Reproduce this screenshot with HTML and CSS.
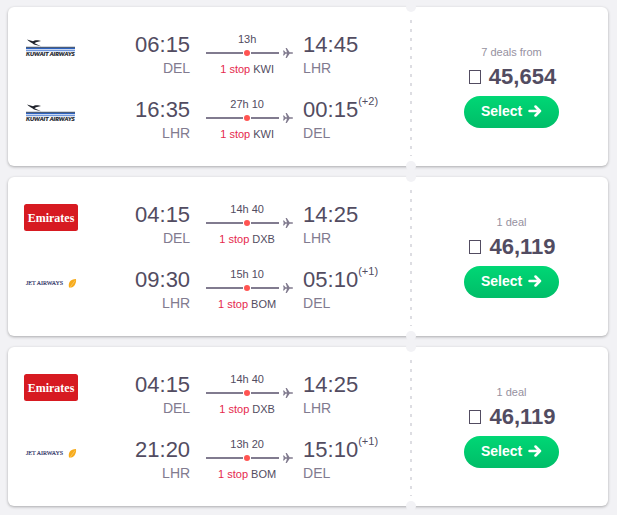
FILE: index.html
```html
<!DOCTYPE html>
<html lang="en">
<head>
<meta charset="utf-8">
<meta name="viewport" content="width=device-width, initial-scale=1">
<title>Flight results</title>
<link rel="stylesheet" href="styles.css">
</head>
<body>
<svg class="defs" aria-hidden="true">
  <symbol id="crane" viewBox="0 0 54 27">
    <path d="M3 5.500 L9 7.300 C10 5.800 15 5.800 17 7 L12 8.200 L10.500 9.200 L17 12.300 L10 10.500 C8 8.500 5 8 3 5.500Z" fill="#20232b"/>
    <path d="M2 12.800H51V14H2Z" fill="#4b5d78"/>
    <path d="M2 14H51V15.300H2Z" fill="#2d62c0"/>
    <path d="M2 15.900H51V17.200H2Z" fill="#6f97dc"/>
  </symbol>
  <symbol id="feather" viewBox="0 0 54 27">
    <path d="M45 18.500 C44 14 46 10 52 10 C52.500 13 51 17.500 47.500 18.500Z" fill="#f7ab1b"/>
    <path d="M46 18.500L51 11.500" stroke="#fbd077" stroke-width=".7"/>
  </symbol>
  <symbol id="plane" viewBox="0 0 10 10">
    <path d="M0 2.600H1L2.500 4.300H4L2.600 0H3.800L6.600 4.300H9C9.700 4.300 10 4.700 10 5S9.700 5.700 9 5.700H6.600L3.800 10H2.600L4 5.700H2.500L1 7.400H0L.7 5Z" fill="#817b8f"/>
  </symbol>
</svg>
<main class="results">
  <article class="ticket">
    <div class="legs">
      <div class="leg">
        <svg class="logo" viewBox="0 0 54 27"><use href="#crane"/><text x="2" y="22" class="kuwait-text">KUWAIT AIRWAYS</text></svg>
        <div class="depart"><div class="time">06:15</div><div class="code">DEL</div></div>
        <div class="route">
          <div class="note">13h</div>
          <div class="track"><i class="line before"></i><i class="dot"></i><i class="line after"></i><svg class="plane"><use href="#plane"/></svg></div>
          <div class="note stops"><span class="stop">1 stop</span> KWI</div>
        </div>
        <div class="arrive"><div class="time">14:45</div><div class="code">LHR</div></div>
      </div>
      <div class="leg">
        <svg class="logo" viewBox="0 0 54 27"><use href="#crane"/><text x="2" y="22" class="kuwait-text">KUWAIT AIRWAYS</text></svg>
        <div class="depart"><div class="time">16:35</div><div class="code">LHR</div></div>
        <div class="route">
          <div class="note">27h 10</div>
          <div class="track"><i class="line before"></i><i class="dot"></i><i class="line after"></i><svg class="plane"><use href="#plane"/></svg></div>
          <div class="note stops"><span class="stop">1 stop</span> KWI</div>
        </div>
        <div class="arrive"><div class="time">00:15<sup>(+2)</sup></div><div class="code">DEL</div></div>
      </div>
    </div>
    <div class="tear"></div>
    <div class="offer">
      <div class="deals">7 deals from</div>
      <div class="price"><span class="currency"></span>45,654</div>
      <button class="select" type="button">Select <svg class="arrow" viewBox="0 0 14 12"><path d="M1.500 6H12M7.500 1.500L12 6L7.500 10.500"/></svg></button>
    </div>
  </article>

  <article class="ticket">
    <div class="legs">
      <div class="leg">
        <svg class="logo" viewBox="0 0 54 27"><rect width="54" height="27" rx="2.500" fill="#d71a21"/><text x="27" y="18" class="emirates-text">Emirates</text></svg>
        <div class="depart"><div class="time">04:15</div><div class="code">DEL</div></div>
        <div class="route">
          <div class="note">14h 40</div>
          <div class="track"><i class="line before"></i><i class="dot"></i><i class="line after"></i><svg class="plane"><use href="#plane"/></svg></div>
          <div class="note stops"><span class="stop">1 stop</span> DXB</div>
        </div>
        <div class="arrive"><div class="time">14:25</div><div class="code">LHR</div></div>
      </div>
      <div class="leg">
        <svg class="logo" viewBox="0 0 54 27"><text x="2" y="16" class="jet-text">JET AIRWAYS</text><use href="#feather"/></svg>
        <div class="depart"><div class="time">09:30</div><div class="code">LHR</div></div>
        <div class="route">
          <div class="note">15h 10</div>
          <div class="track"><i class="line before"></i><i class="dot"></i><i class="line after"></i><svg class="plane"><use href="#plane"/></svg></div>
          <div class="note stops"><span class="stop">1 stop</span> BOM</div>
        </div>
        <div class="arrive"><div class="time">05:10<sup>(+1)</sup></div><div class="code">DEL</div></div>
      </div>
    </div>
    <div class="tear"></div>
    <div class="offer">
      <div class="deals">1 deal</div>
      <div class="price"><span class="currency"></span>46,119</div>
      <button class="select" type="button">Select <svg class="arrow" viewBox="0 0 14 12"><path d="M1.500 6H12M7.500 1.500L12 6L7.500 10.500"/></svg></button>
    </div>
  </article>

  <article class="ticket">
    <div class="legs">
      <div class="leg">
        <svg class="logo" viewBox="0 0 54 27"><rect width="54" height="27" rx="2.500" fill="#d71a21"/><text x="27" y="18" class="emirates-text">Emirates</text></svg>
        <div class="depart"><div class="time">04:15</div><div class="code">DEL</div></div>
        <div class="route">
          <div class="note">14h 40</div>
          <div class="track"><i class="line before"></i><i class="dot"></i><i class="line after"></i><svg class="plane"><use href="#plane"/></svg></div>
          <div class="note stops"><span class="stop">1 stop</span> DXB</div>
        </div>
        <div class="arrive"><div class="time">14:25</div><div class="code">LHR</div></div>
      </div>
      <div class="leg">
        <svg class="logo" viewBox="0 0 54 27"><text x="2" y="16" class="jet-text">JET AIRWAYS</text><use href="#feather"/></svg>
        <div class="depart"><div class="time">21:20</div><div class="code">LHR</div></div>
        <div class="route">
          <div class="note">13h 20</div>
          <div class="track"><i class="line before"></i><i class="dot"></i><i class="line after"></i><svg class="plane"><use href="#plane"/></svg></div>
          <div class="note stops"><span class="stop">1 stop</span> BOM</div>
        </div>
        <div class="arrive"><div class="time">15:10<sup>(+1)</sup></div><div class="code">DEL</div></div>
      </div>
    </div>
    <div class="tear"></div>
    <div class="offer">
      <div class="deals">1 deal</div>
      <div class="price"><span class="currency"></span>46,119</div>
      <button class="select" type="button">Select <svg class="arrow" viewBox="0 0 14 12"><path d="M1.500 6H12M7.500 1.500L12 6L7.500 10.500"/></svg></button>
    </div>
  </article>
</main>
</body>
</html>
```
FILE: styles.css
```css
* { box-sizing: border-box; }

body {
  margin: 0;
  background: #f2f2f5;
  color: #524c61;
  font-family: "Liberation Sans", Arial, sans-serif;
}

.defs { position: absolute; width: 0; height: 0; }

.results {
  display: grid;
  gap: 11px;
  padding: 7px 9px 7px 8px;
}

.ticket {
  display: grid;
  grid-template-columns: 1fr 8px 193px;
  background: #fff;
  border-radius: 6px;
  box-shadow: 0 1px 3px rgba(0, 0, 0, .3);
}

.legs {
  display: grid;
  gap: 15px;
  padding: 24px 0 20px 16px;
}

.leg {
  display: grid;
  grid-template-columns: 54px 9fr 87px 8fr;
}

.logo { width: 54px; height: 27px; margin-top: 3px; overflow: visible; }

.kuwait-text { font: italic 900 6px Lato, sans-serif; fill: #20232b; stroke: #20232b; stroke-width: .2px; }
.emirates-text { font: bold 12px "Liberation Serif", serif; fill: #fff; text-anchor: middle; }
.jet-text { font: 6px "Liberation Serif", serif; fill: #26295c; stroke: #26295c; stroke-width: .15px; }

.depart { padding-right: 16px; text-align: right; }
.arrive { padding-left: 10px; }

.time { font-size: 22px; line-height: 28px; white-space: nowrap; }
.time sup { font-size: 11px; line-height: 0; vertical-align: 12px; }
.code { font-size: 14px; line-height: 18px; padding-bottom: 4px; color: #817b8f; }

.route { padding-top: 1px; }
.note { padding-right: 5px; font-size: 11px; line-height: 14px; text-align: center; }
.stops { margin-top: 2px; }
.stop { color: #e5294d; }

.track { display: flex; align-items: center; height: 14px; }
.line { height: 2px; background: #817b8f; }
.before { flex: 37; }
.after { flex: 28; }
.dot { width: 6px; height: 6px; margin: 0 1px; border-radius: 50%; background: #ff5452; }
.plane { width: 10px; height: 10px; margin-left: 4px; }

.tear {
  position: relative;
  background: repeating-linear-gradient(#dddde2 0 3px, transparent 3px 9px) center / 2px 100% no-repeat content-box;
  padding: 13px 0 10px;
}
.tear::before,
.tear::after {
  content: "";
  position: absolute;
  left: -1px;
  width: 10px;
  height: 10px;
  border-radius: 50%;
  background: #f2f2f5;
}
.tear::before { top: -5px; }
.tear::after { bottom: -5px; }

.offer {
  display: flex;
  flex-direction: column;
  align-items: center;
  justify-content: center;
}
.deals { font-size: 11px; line-height: 14px; color: #96919f; }
.price { margin: 4px 0 5px; padding-left: 2px; font-size: 22px; font-weight: bold; line-height: 28px; }
.currency {
  display: inline-block;
  width: 12px;
  height: 14px;
  margin-right: 8px;
  border: 1px solid #524c61;
}

.select {
  display: flex;
  align-items: center;
  justify-content: center;
  gap: 6px;
  width: 95px;
  height: 32px;
  padding: 0 0 2px;
  border: 0;
  border-radius: 16px;
  background: linear-gradient(#00d775, #00bd68);
  color: #fff;
  font: bold 14px "Liberation Sans", Arial, sans-serif;
}
.arrow {
  width: 14px;
  height: 12px;
  fill: none;
  stroke: #fff;
  stroke-width: 2.5;
  stroke-linecap: round;
  stroke-linejoin: round;
}
```
